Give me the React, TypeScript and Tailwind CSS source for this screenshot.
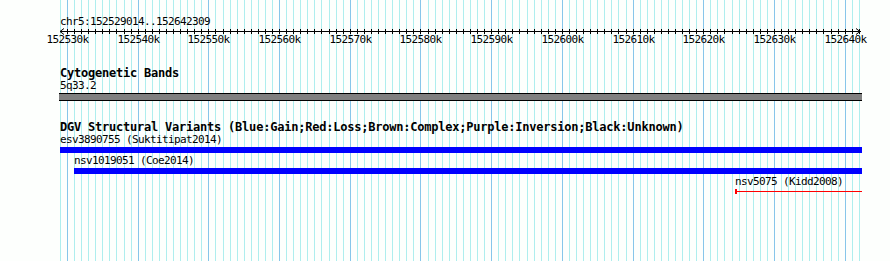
const START = 152529014
const END = 152642309
const W = 801
const L = 60

const px = (p: number) => ((p - START) * W) / (END - START)

const kbs: number[] = []
for (let k = 152529; k <= 152642; k++) kbs.push(k)

const small = 'h-[12px] leading-[10px] text-[11px] tracking-[-0.62px] whitespace-nowrap'
const bold = 'h-[13px] leading-[11px] text-[12px] font-bold tracking-[-0.22px] whitespace-nowrap'

function Grid() {
    return (
        <div className="absolute inset-0">
            {kbs.map((k) => (
                <div
                    key={k}
                    className={k % 10 === 0 ? 'absolute top-0 bottom-0 w-px bg-[#87c6ea]' : 'absolute top-0 bottom-0 w-px bg-[#aeeeee]'}
                    style={{ left: L + Math.round(px(k * 1000)) }}
                />
            ))}
        </div>
    )
}

function Ruler() {
    return (
        <>
            <svg width={804} height={7} className="block -ml-px -mt-px">
                <line x1={1} y1={3.5} x2={802} y2={3.5} stroke="black" strokeWidth={1} />
                <path d="M1 3.5 L5 0.5 M1 3.5 L5 6.5 M801 3.5 L797 0.5 M801 3.5 L797 6.5" stroke="black" strokeWidth={1} fill="none" />
                {kbs.slice(1).map((k) => {
                    const x = Math.round(px(k * 1000)) + 1.5
                    return <line key={k} x1={x} y1={1} x2={x} y2={6} stroke="black" strokeWidth={1} />
                })}
            </svg>
            <div className={`relative ${small}`}>
                {kbs.filter((k) => k % 10 === 0).map((k) => (
                    <span
                        key={k}
                        className="absolute top-0 -translate-x-1/2"
                        style={{ left: Math.round(px(k * 1000)) + 0.5 }}
                    >
                        {k}k
                    </span>
                ))}
            </div>
        </>
    )
}

export default function App() {
    return (
        <div className="relative w-[890px] h-[261px] overflow-hidden bg-[#fdfffd] text-black font-['DejaVu_Sans_Mono',monospace]">
            <Grid />

            <div className="relative pl-[60px] pt-[17px]">
                {/* ruler */}
                <div className={small}>chr5:152529014..152642309</div>
                <Ruler />

                {/* cytogenetic bands */}
                <div className={`mt-[21px] ${bold}`}>Cytogenetic Bands</div>
                <div className={small}>5q33.2</div>
                <div className="-ml-px w-[803px] h-[8px] border-y border-black bg-[#808080]" />

                {/* DGV */}
                <div className={`mt-[21px] ${bold}`}>
                    DGV Structural Variants (Blue:Gain;Red:Loss;Brown:Complex;Purple:Inversion;Black:Unknown)
                </div>
                <div className={small}>esv3890755 (Suktitipat2014)</div>
                <div className="w-[802px] h-[6px] bg-[#0000ff]" />

                <div className={`mt-[3px] ml-[14px] ${small}`}>nsv1019051 (Coe2014)</div>
                <div className="ml-[14px] w-[788px] h-[6px] bg-[#0000ff]" />

                <div className={`mt-[3px] ml-[675px] ${small}`}>nsv5075 (Kidd2008)</div>
                <div className="ml-[675px] w-[127px] h-[5px] flex items-center">
                    <div className="w-[2px] h-[5px] bg-[#ff0000]" />
                    <div className="flex-1 h-px bg-[#ff0000]" />
                </div>
            </div>
        </div>
    )
}
